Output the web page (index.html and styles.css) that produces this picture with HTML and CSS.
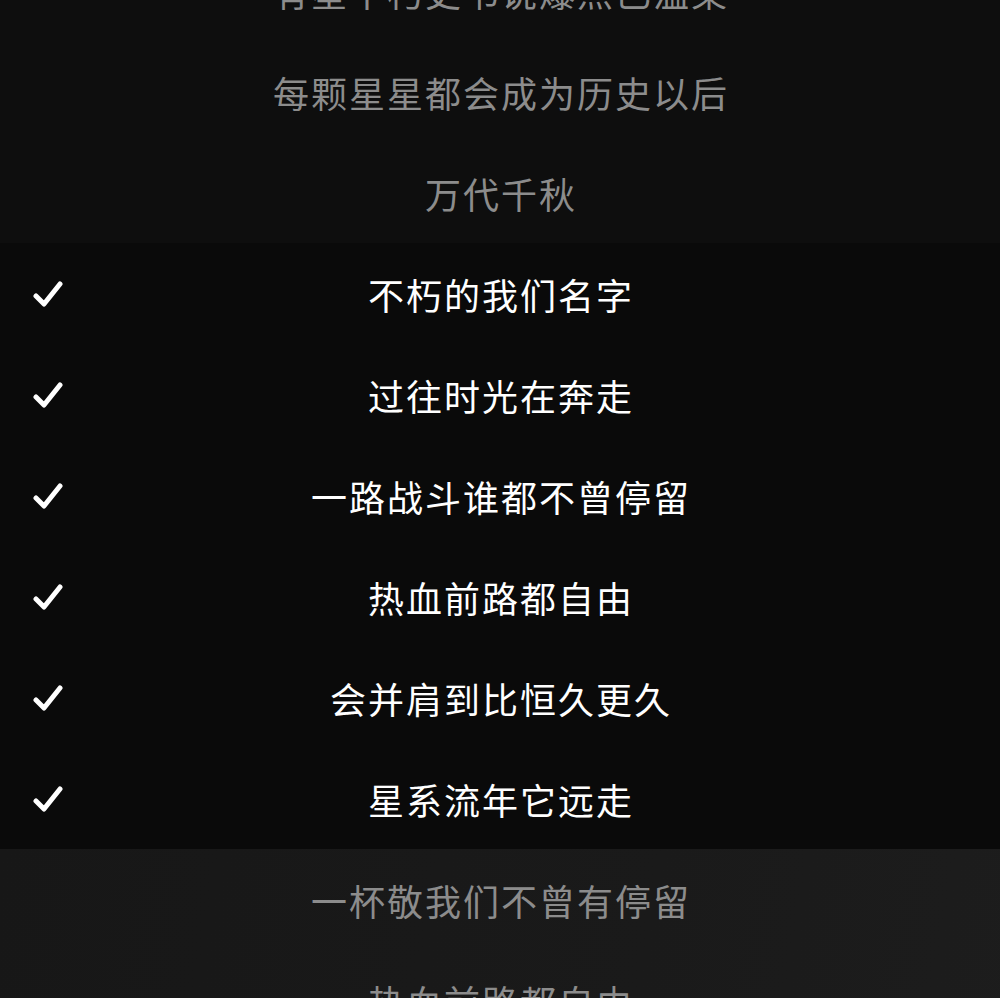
FILE: index.html
```html
<!DOCTYPE html>
<html lang="zh-CN">
<head>
    <title>万代千秋</title>
    <meta charset="utf-8" />
    <link rel="stylesheet" href="styles.css">
</head>
<body>
    <div id="lyrics">
        <div class="group past">
            <div class="line"><span class="text">有星不朽史书说爆点已温柔</span></div>
            <div class="line"><span class="text">每颗星星都会成为历史以后</span></div>
            <div class="line"><span class="text">万代千秋</span></div>
        </div>
        <div class="group picked">
            <div class="line"><span class="check"><svg viewBox="0 0 30 28"><polyline points="3,16 11,24 27,4" /></svg></span><span class="text">不朽的我们名字</span></div>
            <div class="line"><span class="check"><svg viewBox="0 0 30 28"><polyline points="3,16 11,24 27,4" /></svg></span><span class="text">过往时光在奔走</span></div>
            <div class="line"><span class="check"><svg viewBox="0 0 30 28"><polyline points="3,16 11,24 27,4" /></svg></span><span class="text">一路战斗谁都不曾停留</span></div>
            <div class="line"><span class="check"><svg viewBox="0 0 30 28"><polyline points="3,16 11,24 27,4" /></svg></span><span class="text">热血前路都自由</span></div>
            <div class="line"><span class="check"><svg viewBox="0 0 30 28"><polyline points="3,16 11,24 27,4" /></svg></span><span class="text">会并肩到比恒久更久</span></div>
            <div class="line"><span class="check"><svg viewBox="0 0 30 28"><polyline points="3,16 11,24 27,4" /></svg></span><span class="text">星系流年它远走</span></div>
        </div>
        <div class="group rest">
            <div class="line"><span class="text">一杯敬我们不曾有停留</span></div>
            <div class="line"><span class="text">热血前路都自由</span></div>
        </div>
    </div>
</body>
</html>
```

FILE: styles.css
```css
html, body { margin: 0; padding: 0; height: 100%; overflow: hidden; }
body { background-color: #0e0e0e; font-family: "Noto Sans CJK SC", "Noto Sans", sans-serif; }
#lyrics { margin-top: -60px; }

.group.past { background-color: #0e0e0e; }
.group.picked { background-color: #0a0a0a; }
.group.rest { background: linear-gradient(100deg, #171717 0%, #1a1a1a 60%, #1d1d1d 100%); height: 600px; }

.line { display: grid; grid-template-columns: 1fr auto 1fr; align-items: center; height: 101px; }
.line .text { grid-column: 2; font-size: 36px; line-height: 1; color: #8c8c8c; letter-spacing: 2px; margin-right: -2px; white-space: nowrap; }
.picked .line .text { color: #ffffff; }

.line .check { grid-column: 1; grid-row: 1; justify-self: start; margin-left: 33px; width: 30px; height: 28px; }
.line .check svg { display: block; width: 30px; height: 28px; }
.line .check polyline { fill: none; stroke: #ffffff; stroke-width: 5; stroke-linecap: round; stroke-linejoin: round; }
```
